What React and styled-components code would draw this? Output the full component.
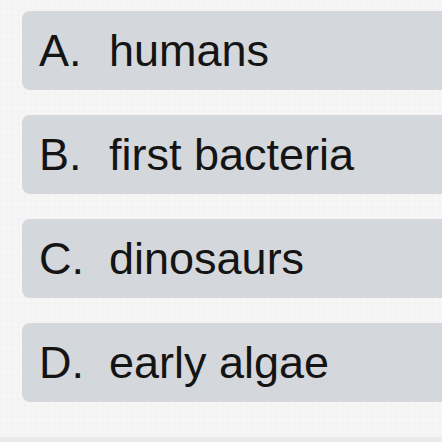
import React from "react";
import styled, { createGlobalStyle } from "styled-components";

const GlobalStyle = createGlobalStyle`
    html, body {
        margin: 0;
        padding: 0;
        background: #f6f6f7;
        overflow: hidden;
    }
    body {
        font-family: "Liberation Sans", Arial, sans-serif;
    }
`;

const Page = styled.div`
    width: 442px;
    height: 442px;
    display: flex;
    flex-direction: column;
    background:
        repeating-linear-gradient(90deg, rgba(0,0,0,0.012) 0 1px, transparent 1px 6px),
        repeating-linear-gradient(0deg, rgba(0,0,0,0.012) 0 1px, transparent 1px 6px),
        #f6f6f7;
`;

const List = styled.div`
    display: flex;
    flex-direction: column;
    gap: 25px;
    padding: 11px 0 0 22px;
    flex: 1;
`;

const Option = styled.div`
    height: 79px;
    margin-right: -20px;
    display: flex;
    align-items: center;
    padding-left: 17px;
    background: #d4d7db;
    border-radius: 8px;
    color: #141414;
    font-size: 45px;
`;

const Letter = styled.span`
    width: 70px;
    flex-shrink: 0;
`;

const Answer = styled.span`
    white-space: nowrap;
`;

const Footer = styled.div`
    height: 5px;
    background: #ebebec;
`;

const options = [
    { key: "A.", text: "humans" },
    { key: "B.", text: "first bacteria" },
    { key: "C.", text: "dinosaurs" },
    { key: "D.", text: "early algae" },
];

const App = () => {
    return (
        <Page>
            <GlobalStyle />
            <List>
                {options.map((o) => (
                    <Option key={o.key}>
                        <Letter>{o.key}</Letter>
                        <Answer>{o.text}</Answer>
                    </Option>
                ))}
            </List>
            <Footer />
        </Page>
    );
};

export default App;
